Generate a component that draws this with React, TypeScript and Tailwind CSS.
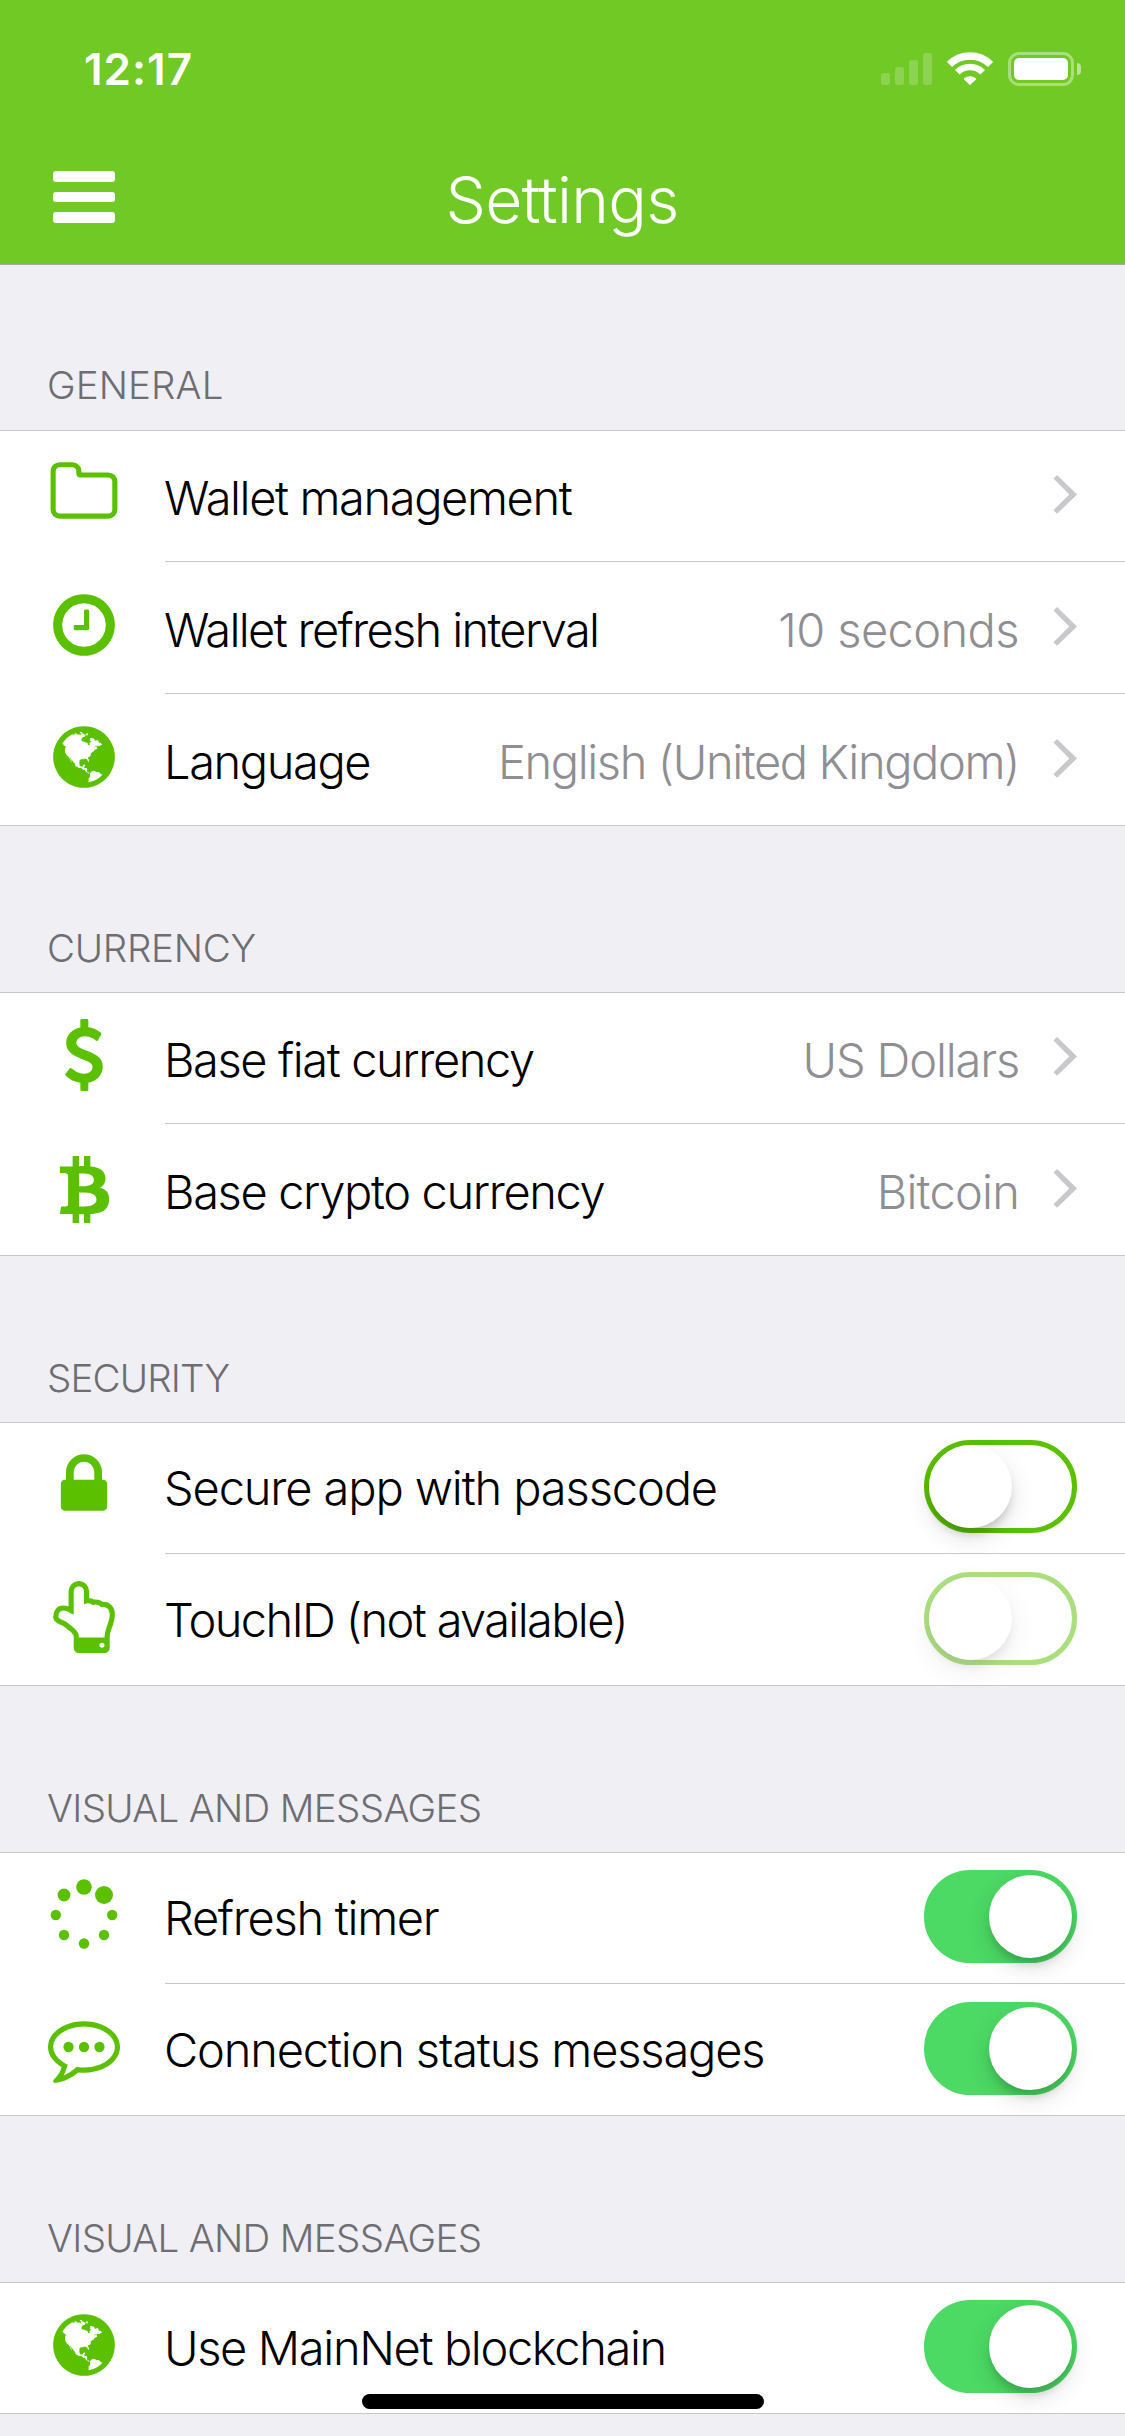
import type { ReactNode } from 'react';
import { FaBtc } from 'react-icons/fa';

function Glyph({ d }: { d: string }) {
  return (
    <svg className="size-[72px]" viewBox="0 0 1792 1792" fill="currentColor">
      <path d={d} />
    </svg>
  );
}

const FOLDER =
  'M1600 1312v-704q0-40-28-68t-68-28h-704q-40 0-68-28t-28-68v-64q0-40-28-68t-68-28h-320q-40 0-68 28t-28 68v960q0 40 28 68t68 28h1216q40 0 68-28t28-68zm128-704v704q0 92-66 158t-158 66h-1216q-92 0-158-66t-66-158v-960q0-92 66-158t158-66h320q92 0 158 66t66 158v32h672q92 0 158 66t66 158z';
const CLOCK =
  'M1024 544v448q0 14-9 23t-23 9h-320q-14 0-23-9t-9-23v-64q0-14 9-23t23-9h224v-352q0-14 9-23t23-9h64q14 0 23 9t9 23zm416 352q0-148-73-273t-198-198-273-73-273 73-198 198-73 273 73 273 198 198 273 73 273-73 198-198 73-273zm224 0q0 209-103 385.5t-279.5 279.5-385.5 103-385.5-103-279.5-279.5-103-385.5 103-385.5 279.5-279.5 385.5-103 385.5 103 279.5 279.5 103 385.5z';
const DOLLAR =
  'M1362 1185q0 153-99.5 263.5t-258.5 136.5v175q0 14-9 23t-23 9h-135q-13 0-22.5-9.5t-9.5-22.5v-175q-66-9-127.5-31t-101.5-44.5-74-48-46.5-37.5-17.5-18q-17-21-2-41l103-135q7-10 23-12 15-2 24 9l2 2q113 99 243 125 37 8 74 8 81 0 142.5-43t61.5-122q0-28-15-53t-33.5-42-58.5-37.5-66-32-80-32.5q-39-16-61.5-25t-61.5-26.5-62.5-31-56.5-35.5-53.5-42.5-43.5-49-35.5-58-21-66.5-8.5-78q0-138 98-242t255-134v-180q0-13 9.5-22.5t22.5-9.5h135q14 0 23 9t9 23v176q57 6 110.5 23t87 33.5 63.5 37.5 39 29 15 14q17 18 5 38l-81 146q-8 15-23 16-14 3-27-7-3-3-14.5-12t-39-26.5-58.5-32-74.5-26-85.5-11.5q-95 0-155 43t-60 111q0 26 8.5 48t29.5 41.5 39.5 33 56 31 60.5 27 70 27.5q53 20 81 31.5t76 35 75.5 42.5 62 50 53 63.5 31.5 76.5 13 94z';
const LOCK =
  'M640 768h512v-192q0-106-75-181t-181-75-181 75-75 181v192zm832 96v576q0 40-28 68t-68 28h-960q-40 0-68-28t-28-68v-576q0-40 28-68t68-28h32v-192q0-184 132-316t316-132 316 132 132 316v192h32q40 0 68 28t28 68z';
const HAND =
  'M1408 1600q0-26-19-45t-45-19-45 19-19 45 19 45 45 19 45-19 19-45zm128-764q0-189-167-189-26 0-56 5-16-30-52.5-47.5t-73.5-17.5-69 18q-50-53-119-53-25 0-55.5 10t-47.5 25v-331q0-52-38-90t-90-38q-51 0-89.5 39t-38.5 89v576q-20 0-48.5-15t-55-33-68-33-84.5-15q-67 0-97.5 44.5t-30.5 115.5q0 24 139 90 44 24 65 37 64 40 145 112 81 71 106 101 57 69 57 140v32h640v-32q0-72 32-167t64-193.5 32-179.5zm128-5q0 133-69 322-59 164-59 223v288q0 53-37.5 90.5t-90.5 37.5h-640q-53 0-90.5-37.5t-37.5-90.5v-288q0-10-4.5-21.5t-14-23.5-18-22.5-22.5-24-21.5-20.5-21.5-19-17-14q-74-65-129-100-21-13-62-33t-72-37-63-40.5-49.5-55-17.5-69.5q0-125 67-206.5t189-81.5q68 0 128 22v-374q0-104 76-180t179-76q105 0 181 75.5t76 180.5v169q62 4 119 37 21-3 43-3 101 0 178 60 139-1 219.5 85t80.5 227z';
const BUBBLE =
  'M640 896q0 53-37.5 90.5t-90.5 37.5-90.5-37.5-37.5-90.5 37.5-90.5 90.5-37.5 90.5 37.5 37.5 90.5zm384 0q0 53-37.5 90.5t-90.5 37.5-90.5-37.5-37.5-90.5 37.5-90.5 90.5-37.5 90.5 37.5 37.5 90.5zm384 0q0 53-37.5 90.5t-90.5 37.5-90.5-37.5-37.5-90.5 37.5-90.5 90.5-37.5 90.5 37.5 37.5 90.5zm-512-512q-204 0-381.5 69.5t-282 187.5-104.5 255q0 112 71.5 213.5t201.5 175.5l87 50-27 96q-24 91-70 172 152-63 275-171l43-38 57 6q69 8 130 8 204 0 381.5-69.5t282-187.5 104.5-255-104.5-255-282-187.5-381.5-69.5zm896 512q0 174-120 321.5t-326 233-450 85.5q-70 0-145-8-198 175-460 242-49 14-114 22h-5q-15 0-27-10.5t-16-27.5v-1q-3-4-.5-12t2-10 4.500-9.500l6-9 7-8.500 8-9q7-8 31-34.500t34.500-38 31-39.500 32.500-51 27-59 26-76q-157-89-247.500-220t-90.500-281q0-174 120-321.500t326-233 450-85.500 450 85.500 326 233 120 321.500z';
const GLOBE =
  'M896 128q209 0 385.5 103t279.5 279.5 103 385.5-103 385.5-279.5 279.5-385.5 103-385.5-103-279.5-279.5-103-385.5 103-385.5 279.5-279.5 385.5-103zm274 521q-2 1-9.5 9.5t-13.5 9.5q2 0 4.5-5t5-11 3.5-7q6-7 22-15 14-6 52-12 34-8 51 11-2-2 9.5-13t14.5-12q3-2 15-4.5t15-7.5l2-22q-12 1-17.5-7t-6.5-21q0 2-6 8 0-7-4.5-8t-11.5 1-9 1q-10-3-15-7.5t-8-16.5-4-15q-2-5-9.5-11t-9.5-10q-1-2-2.5-5.5t-3-6.5-4-5.5-5.5-2.5-7 5-7.5 10-4.5 5q-3-2-6-1.5t-4.5 1-4.5 3-5 3.5q-3 2-8.5 3t-8.5 2q15-5-1-11-10-4-16-3 9-4 7.5-12t-8.5-14h5q-1-4-8.500-8.500t-17.500-8.500-13-6q-8-5-34-9.500t-33-.5q-5 6-4.500 10.500t4 14 3.500 12.500q1 6-5.500 13t-6.500 12q0 7 14 15.500t10 21.500q-3 8-16 16t-16 12q-5 8-1.500 18.500t10.500 16.500q2 2 1.500 4t-3.500 4.500-5.500 4-6.500 3.500l-3 2q-11 5-20.500-6t-13.500-26q-7-25-16-30-23-8-29 1-5-13-41-26-25-9-58-4 6-1 0-15-7-15-19-12 3-6 4-17.500t1-13.500q3-13 12-23 1-1 7-8.500t9.500-13.500.5-6q35 4 50-11 5-5 11.500-17t10.500-17q9-6 14-5.500t14.500 5.500 14.500 5q14 1 15.500-11t-7.500-20q12 1 3-17-5-7-8-9-12-4-27 5-8 4 2 8-1-1-9.500 10.500t-16.500 17.500-16-5q-1-1-5.500-13.500t-9.500-13.500q-8 0-16 15 3-8-11-15t-24-8q19-12-8-27-7-4-20.500-5t-19.500 4q-5 7-5.500 11.500t5 8 10.500 5.500 11.500 4 8.500 3q14 10 8 14-2 1-8.500 3.500t-11.500 4.500-6 4q-3 4 0 14t-2 14q-5-5-9-17.500t-7-16.500q7 9-25 6l-10-1q-4 0-16 2t-20.500 1-13.500-8q-4-8 0-20 1-4 4-2-4-3-11-9.500t-10-8.500q-46 15-94 41 6 1 12-1 5-2 13-6.500t10-5.500q34-14 42-7l5-5q14 16 20 25-7-4-30-1-20 6-22 12 7 12 5 18-4-3-11.500-10t-14.500-11-15-5q-16 0-22 1-146 80-235 222 7 7 12 8 4 1 5 9t2.500 11 11.500-3q9 8 3 19 1-1 44 27 19 17 21 21 3 11-10 18-1-2-9-9t-9-4q-3 5 .5 18.500t10.500 12.500q-7 0-9.500 16t-2.500 35.500-1 23.500l2 1q-3 12 5.500 34.500t21.500 19.500q-13 3 20 43 6 8 8 9 3 2 12 7.500t15 10 10 10.500q4 5 10 22.500t14 23.500q-2 6 9.500 20t10.500 23q-1 0-2.500 1t-2.500 1q3 7 15.500 14t15.500 13q1 3 2 10t3 11 8 2q2-20-24-62-15-25-17-29-3-5-5.500-15.500t-4.500-14.500q2 0 6 1.500t8.500 3.500 7.500 4 2 3q-3 7 2 17.500t12 18.500 17 19 12 13q6 6 14 19.500t0 13.500q9 0 20 10t17 20q5 8 8 26t5 24q2 7 8.500 13.500t12.500 9.500l16 8 13 7q5 2 18.500 10.500t21.500 11.500q10 4 16 4t14.500-2.500 13.500-3.500q15-2 29 15t21 21q36 19 55 11-2 1 .5 7.500t8 15.500 9 14.500 5.500 8.500q5 6 18 15t18 15q6-4 7-9-3 8 7 20t18 10q14-3 14-32-31 15-49-18 0-1-2.500-5.500t-4-8.500-2.500-8.500 0-7.500 5-3q9 0 10-3.500t-2-12.500-4-13q-1-8-11-20t-12-15q-5 9-16 8t-16-9q0 1-1.500 5.500t-1.500 6.500q-13 0-15-1 1-3 2.500-17.500t3.500-22.500q1-4 5.500-12t7.500-14.500 4-12.500-4.500-9.500-17.500-2.500q-19 1-26 20-1 3-3 10.500t-5 11.500-9 7q-7 3-24 2t-24-5q-13-8-22.500-29t-9.500-37q0-10 2.500-26.500t3-25-5.500-24.500q3-2 9-9.500t10-10.500q2-1 4.500-1.500t4.500 0 4-1.500 3-6q-1-1-4-3-3-3-4-3 7 3 28.500-1.500t27.500 1.500q15 11 22-2 0-1-2.500-9.500t-.5-13.500q5 27 29 9 3 3 15.500 5t17.500 5q3 2 7 5.500t5.500 4.500 5-.5 8.500-6.500q10 14 12 24 11 40 19 44 7 3 11 2t4.500-9.500 0-14-1.500-12.500l-1-8v-18l-1-8q-15-3-18.500-12t1.500-18.500 15-18.500q1-1 8-3.500t15.500-6.500 12.500-8q21-19 15-35 7 0 11-9-1 0-5-3t-7.500-5-4.500-2q9-5 2-16 5-3 7.500-11t7.500-10q9 12 21 2 8-8 1-16 5-7 20.500-10.500t18.500-9.500q7 2 8-2t1-12 3-12q4-5 15-9t13-5l17-11q3-4 0-4 18 2 31-11 10-11-6-20 3-6-3-9.500t-15-5.500q3-1 11.500-.5t10.500-1.500q15-10-7-16-17-5-43 12zm-163 877q206-36 351-189-3-3-12.500-4.500t-12.500-3.500q-18-7-24-8 1-7-2.500-13t-8-9-12.500-8-11-7q-2-2-7-6t-7-5.500-7.500-4.500-8.500-2-10 1l-3 1q-3 1-5.500 2.500t-5.500 3-4 3 0 2.500q-21-17-36-22-5-1-11-5.500t-10.500-7-10-1.500-11.500 7q-5 5-6 15t-2 13q-7-5 0-17.500t2-18.500q-3-6-10.500-4.500t-12 4.500-11.500 8.500-9 6.500-8.500 5.500-8.500 7.500q-3 4-6 12t-5 11q-2-4-11.500-6.500t-9.500-5.500q2 10 4 35t5 38q7 31-12 48-27 25-29 40-4 22 12 26 0 7-8 20.500t-7 21.500q0 6 2 16z';

function SpinnerIcon() {
  return (
    <svg className="size-[72px]" viewBox="0 0 72 72" fill="currentColor">
      <circle cx="36" cy="8" r="7.8" />
      <circle cx="56" cy="16" r="9" />
      <circle cx="64.2" cy="36" r="5.2" />
      <circle cx="56" cy="56" r="5.2" />
      <circle cx="36" cy="64.5" r="5.2" />
      <circle cx="16" cy="56" r="5.2" />
      <circle cx="7.8" cy="36" r="5.2" />
      <circle cx="16" cy="16" r="6.4" />
    </svg>
  );
}

function Chevron() {
  return (
    <svg className="mt-[45px] ml-[34px] mr-12 h-[39px] w-6 shrink-0" viewBox="0 0 24 39" fill="#c7c7cc">
      <path d="M.5 3.6 4.1 0 24 19.4 4.1 38.8.5 35.2 16.3 19.4z" />
    </svg>
  );
}

function Toggle({ on = false, disabled = false }: { on?: boolean; disabled?: boolean }) {
  return (
    <div
      className={`mt-[18px] mr-12 flex h-[93px] w-[153px] shrink-0 rounded-full border-[5px] ${
        on ? 'justify-end border-[#4cd964] bg-[#4cd964]' : 'border-[#5ac000] bg-white'
      } ${disabled ? 'opacity-50' : ''}`}
    >
      <div className="size-[83px] rounded-full bg-white shadow-[0_9px_24px_rgba(0,0,0,0.13),0_8px_9px_-2px_rgba(0,0,0,0.15)]" />
    </div>
  );
}

interface RowProps {
  icon: ReactNode;
  label: string;
  labelClass: string;
  value?: string;
  valueClass?: string;
  toggle?: ReactNode;
  last?: boolean;
}

function Row({ icon, label, labelClass, value, valueClass, toggle, last }: RowProps) {
  return (
    <div className={`flex h-[132px] items-start pl-12 text-[47px] leading-[60px] ${last ? 'border-b border-[#c8c7cc]' : ''}`}>
      <div className="mt-[27px] mr-[45px] size-[72px] shrink-0 text-[#5ac000]">{icon}</div>
      <div className={`flex h-[132px] flex-1 items-start ${last ? '' : 'border-b border-[#c8c7cc]'}`}>
        <span className={`-ml-px flex-1 whitespace-nowrap ${toggle ? 'mt-9' : 'mt-[38px]'} ${labelClass}`}>{label}</span>
        {value && <span className={`mt-[38px] whitespace-nowrap text-[#8e8e93] ${valueClass}`}>{value}</span>}
        {toggle ?? <Chevron />}
      </div>
    </div>
  );
}

function Section({ title, titleClass, children }: { title: string; titleClass: string; children: ReactNode }) {
  return (
    <section>
      <h2 className={`flex items-end pl-[47px] text-[38.5px] leading-[48px] text-[#6d6d72] ${titleClass}`}>{title}</h2>
      <div className="border-t border-[#c8c7cc] bg-white">
        <div className="-mt-px">{children}</div>
      </div>
    </section>
  );
}

function StatusBar() {
  return (
    <div className="flex h-[95px] items-start pr-11 pl-[84px] text-white">
      <span className="mt-[43px] flex-1 text-[44px] leading-[52px] font-semibold tracking-[1px]">12:17</span>
      <div className="mt-[52px] flex h-[34px]">
        <div className="flex h-[33px] w-[51px] items-end gap-[5px] opacity-20">
          <div className="h-3 w-[9px] rounded-[3px] bg-white" />
          <div className="h-[18px] w-[9px] rounded-[3px] bg-white" />
          <div className="h-[25px] w-[9px] rounded-[3px] bg-white" />
          <div className="h-8 w-[9px] rounded-[3px] bg-white" />
        </div>
        <svg className="ml-[15px] h-[34px] w-[46px]" viewBox="0 0 46 34" fill="none" stroke="white">
          <path d="M2.5 12.500A29 29 0 0 1 43.5 12.5" strokeWidth="7.3" />
          <path d="M10.3 20.300A18 18 0 0 1 35.7 20.3" strokeWidth="6.5" />
          <path d="M17 27A9 9 0 0 1 29 27L23 32.500z" fill="white" strokeWidth="1" strokeLinejoin="round" />
        </svg>
        <div className="ml-[15px] h-[34px] w-[66px] rounded-[11px] border-[3px] border-white/40 p-[3px]">
          <div className="h-[22px] w-[54px] rounded-[5px] bg-white" />
        </div>
        <div className="mt-[11px] ml-[3px] h-3 w-1 rounded-r-full bg-white/50" />
      </div>
    </div>
  );
}

export default function App() {
  return (
    <main className="relative h-[2436px] w-[1125px] overflow-hidden bg-[#efeff4] font-['Inter','Liberation_Sans',sans-serif] font-light text-black">
      <header className="h-[265px] border-b border-[#a8a8ac] bg-[#71c926] text-white">
        <StatusBar />
        <div className="flex items-start">
          <div className="mt-[76px] ml-[53px] flex w-[62px] flex-col gap-2.5">
            <div className="h-[10.6px] rounded-[3px] bg-white" />
            <div className="h-[10.6px] rounded-[3px] bg-white" />
            <div className="h-[10.6px] rounded-[3px] bg-white" />
          </div>
          <h1 className="mt-[65px] mr-[116px] flex-1 text-center text-[64px] leading-[80px] font-light tracking-[-0.65px]">Settings</h1>
        </div>
      </header>

      <Section title="GENERAL" titleClass="h-[165px] pb-[21px] tracking-[0.1px]">
        <Row icon={<Glyph d={FOLDER} />} label="Wallet management" labelClass="tracking-[-1.4px]" />
        <Row
          icon={<Glyph d={CLOCK} />}
          label="Wallet refresh interval"
          labelClass="tracking-[-1.68px]"
          value="10 seconds"
          valueClass="tracking-[-0.59px]"
        />
        <Row
          icon={<Glyph d={GLOBE} />}
          label="Language"
          labelClass="tracking-[-1.4px]"
          value="English (United Kingdom)"
          valueClass="tracking-[-1.4px]"
          last
        />
      </Section>

      <Section title="CURRENCY" titleClass="h-[166px] pb-5 tracking-[-0.27px]">
        <Row
          icon={<Glyph d={DOLLAR} />}
          label="Base fiat currency"
          labelClass="tracking-[-1.41px]"
          value="US Dollars"
          valueClass="tracking-[-1.16px]"
        />
        <Row
          icon={<FaBtc className="mx-auto mt-[5px] size-[67px]" />}
          label="Base crypto currency"
          labelClass="tracking-[-1.38px]"
          value="Bitcoin"
          valueClass="tracking-[-0.8px]"
          last
        />
      </Section>

      <Section title="SECURITY" titleClass="h-[166px] pb-5 tracking-[-0.85px]">
        <Row icon={<Glyph d={LOCK} />} label="Secure app with passcode" labelClass="tracking-[-1.13px]" toggle={<Toggle />} />
        <Row
          icon={<Glyph d={HAND} />}
          label="TouchID (not available)"
          labelClass="tracking-[-1.65px]"
          toggle={<Toggle disabled />}
          last
        />
      </Section>

      <Section title="VISUAL AND MESSAGES" titleClass="h-[166px] pb-5 tracking-[-0.66px]">
        <Row icon={<SpinnerIcon />} label="Refresh timer" labelClass="tracking-[-1.3px]" toggle={<Toggle on />} />
        <Row
          icon={<Glyph d={BUBBLE} />}
          label="Connection status messages"
          labelClass="tracking-[-1.16px]"
          toggle={<Toggle on />}
          last
        />
      </Section>

      <Section title="VISUAL AND MESSAGES" titleClass="h-[166px] pb-5 tracking-[-0.66px]">
        <Row icon={<Glyph d={GLOBE} />} label="Use MainNet blockchain" labelClass="tracking-[-1.36px]" toggle={<Toggle on />} last />
      </Section>

      <div className="absolute bottom-[27px] left-[362px] h-[15px] w-[402px] rounded-full bg-black" />
    </main>
  );
}
